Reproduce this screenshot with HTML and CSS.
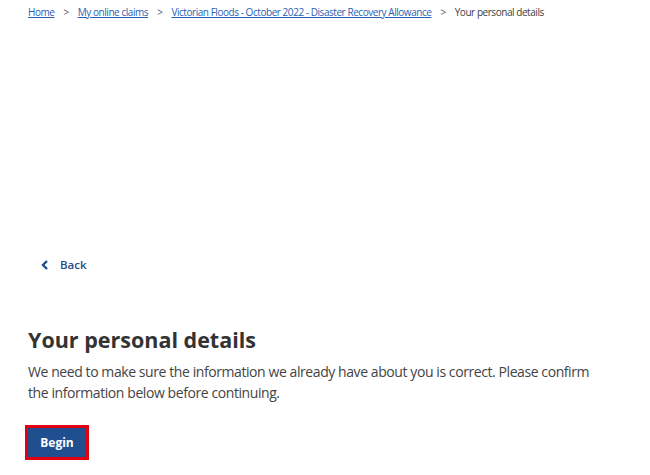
FILE: index.html
```html
<!DOCTYPE html>
<html lang="en">
<head>
<meta charset="utf-8">
<title>Your personal details</title>
<link rel="stylesheet" href="styles.css">
</head>
<body>
<nav class="breadcrumb">
  <a href="#" class="crumb-link">Home</a>
  <span class="sep">&gt;</span>
  <a href="#" class="crumb-link">My online claims</a>
  <span class="sep">&gt;</span>
  <a href="#" class="crumb-link">Victorian Floods - October 2022 - Disaster Recovery Allowance</a>
  <span class="sep">&gt;</span>
  <span class="crumb-current">Your personal details</span>
</nav>
<main class="content">
  <a href="#" class="back">
    <svg class="back-icon" width="8" height="10" viewBox="0 0 8 10"><path d="M6 1 L2 5 L6 9" fill="none" stroke="currentColor" stroke-width="2.4"/></svg>
    <span>Back</span>
  </a>
  <h1 class="title">Your personal details</h1>
  <p class="intro">We need to make sure the information we already have about you is correct. Please confirm the information below before continuing.</p>
  <div class="focus-ring"><button class="btn">Begin</button></div>
</main>
</body>
</html>
```
FILE: styles.css
```css
* { box-sizing: border-box; }
body {
  margin: 0;
  background: #fff;
  font-family: "Open Sans", "Segoe UI", sans-serif;
  color: #3d3d3d;
}
.breadcrumb {
  display: flex;
  align-items: baseline;
  padding: 5px 0 0 28px;
  font-size: 10px;
  letter-spacing: -0.45px;
  line-height: 15px;
  white-space: nowrap;
}
.crumb-link { color: #2b5fb4; text-decoration: underline; }
.sep { color: #555; margin: 0 9px; }
.crumb-current { color: #3d3d3d; }
.content {
  display: flex;
  flex-direction: column;
  align-items: flex-start;
  padding: 0 28px;
}
.back {
  display: flex;
  align-items: center;
  gap: 11px;
  margin: 235px 0 0 13px;
  color: #1f4e8c;
  font-weight: 600;
  font-size: 11.5px;
  line-height: 20px;
  text-decoration: none;
}
.back-icon { display: block; }
.title {
  margin: 51px 0 0;
  font-size: 21.5px;
  line-height: 28px;
  font-weight: 700;
  color: #333;
}
.intro {
  margin: 7px 0 0;
  font-size: 14px;
  letter-spacing: -0.42px;
  line-height: 21px;
  color: #444;
  max-width: 572px;
}
.focus-ring {
  margin-top: 22px;
  margin-left: -3px;
  border: 3px solid #e3000f;
}
.btn {
  display: block;
  width: 58px;
  height: 29px;
  border: none;
  background: #1f4f8f;
  color: #fff;
  font-family: inherit;
  font-weight: 700;
  font-size: 12px;
  padding: 0;
}
```
